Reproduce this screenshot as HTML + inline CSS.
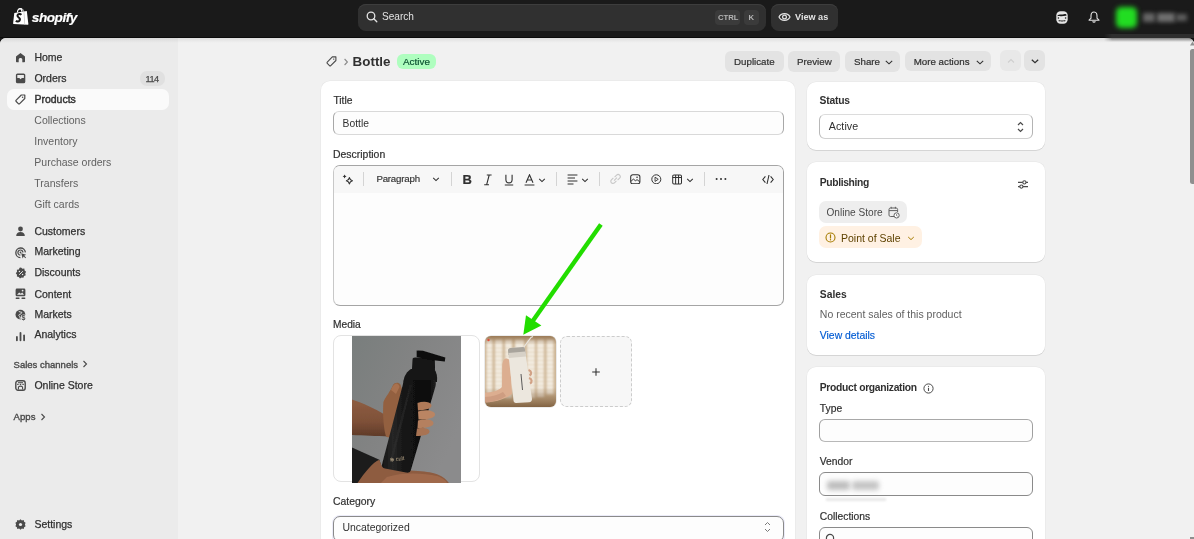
<!DOCTYPE html>
<html><head><meta charset="utf-8"><style>
*{margin:0;padding:0;box-sizing:border-box}
html,body{width:1194px;height:539px;overflow:hidden;background:#1a1a1a;font-family:"Liberation Sans",sans-serif}
#root{position:absolute;left:0;top:0;width:1194px;height:539px;overflow:hidden;will-change:transform;background:#1a1a1a}
.a,.t{position:absolute}
.t{white-space:nowrap}
svg{display:block}
#topbar{position:absolute;left:0;top:0;width:1194px;height:38px;background:#1a1a1a}
#frame{position:absolute;left:0;top:37.5px;width:1194px;height:502px;background:#f1f1f1;border-radius:6px 6px 0 0;overflow:hidden}
#content{border-top-right-radius:6px}
#sidebar{position:absolute;left:0;top:37.5px;width:178px;height:502px;background:#ebebeb;border-top-left-radius:6px}
#content{position:absolute;left:178px;top:37.5px;width:1016px;height:502px;background:#f1f1f1}
.card{position:absolute;background:#fff;border-radius:9px;box-shadow:0 1px 0 rgba(0,0,0,.09),0 0 0 0.5px rgba(0,0,0,.05)}
</style></head><body><div id="root">
<div id="topbar"></div><svg class="a" style="left:10px;top:5px" width="24" height="24" viewBox="0 0 24 24">
<path d="M4.3 8.1 L16.8 5.9 L18.4 19.3 C18.4 19.6 18.2 19.8 17.9 19.8 L3.6 18.9 C3.2 18.9 3 18.6 3.1 18.3 Z" fill="#fff"/>
<path d="M13.5 6.5 L14.3 6.4 L15.2 19.6 L14.4 19.6 Z" fill="#c8c8c8"/>
<path d="M7.4 7.6 C7.4 5 8.8 3.4 10.2 3.6 C11.4 3.8 11.8 5.2 11.8 6.8" stroke="#fff" stroke-width="1.1" fill="none"/>
<path d="M9.6 4.6 C10.4 3.2 12.2 3.2 12.8 4.6 C13.1 5.3 13.2 6 13.2 6.6" stroke="#fff" stroke-width="1" fill="none"/>
<path d="M11.3 9.9 C10.6 9 8.9 8.8 8 9.6 C7 10.5 7.5 11.7 8.7 12.5 C9.9 13.3 10.3 14.4 9.5 15.6 C8.6 16.8 6.7 16.6 5.9 15.8" stroke="#1a1a1a" stroke-width="2" fill="none"/>
</svg><div class="t" style="left:31.80px;top:10.59px;font-size:13.6px;line-height:13.6px;font-weight:700;color:#fff;font-style:italic;letter-spacing:-0.45px;-webkit-text-stroke:0.2px #fff">shopify</div>
<div class="a" style="left:358px;top:4px;width:408px;height:27px;background:#303030;border-radius:8px;box-shadow:inset 0 1px 0 #3d3d3d"></div><svg class="a" style="left:366px;top:11px" width="12" height="12" viewBox="0 0 12 12"><circle cx="5" cy="5" r="3.8" stroke="#e3e3e3" stroke-width="1.3" fill="none"/><path d="M7.8 7.8 L10.8 10.8" stroke="#e3e3e3" stroke-width="1.3" stroke-linecap="round"/></svg><div class="t" style="left:382.00px;top:12.45px;font-size:10.1px;line-height:10.1px;font-weight:400;color:#e3e3e3;">Search</div>
<div class="a" style="left:715px;top:10px;width:25px;height:15px;background:#3b3b3b;border-radius:4px"></div><div class="t" style="left:718.00px;top:13.58px;font-size:7.7px;line-height:7.7px;font-weight:700;color:#b5b5b5;">CTRL</div>
<div class="a" style="left:744px;top:10px;width:15px;height:15px;background:#3b3b3b;border-radius:4px"></div><div class="t" style="left:748.50px;top:13.58px;font-size:7.7px;line-height:7.7px;font-weight:700;color:#b5b5b5;">K</div>
<div class="a" style="left:770.5px;top:4px;width:67.5px;height:27px;background:#303030;border-radius:8px;box-shadow:inset 0 1px 0 #3d3d3d"></div><svg class="a" style="left:778px;top:11px" width="13" height="12" viewBox="0 0 13 12"><path d="M1 6 C3 1.6 10 1.6 12 6 C10 10.4 3 10.4 1 6 Z" stroke="#e3e3e3" stroke-width="1.2" fill="none"/><circle cx="6.5" cy="6" r="1.9" stroke="#e3e3e3" stroke-width="1.2" fill="none"/></svg><div class="t" style="left:795.00px;top:12.90px;font-size:9.1px;line-height:9.1px;font-weight:700;color:#e3e3e3;">View as</div>
<svg class="a" style="left:1055.5px;top:10.5px" width="12" height="13" viewBox="0 0 12 13"><rect x="0.3" y="0.3" width="11.4" height="12.4" rx="4.2" fill="#e6e6e6"/><path d="M1.6 4.2 C3 3.2 5 3.6 6.6 3.4 C8 3.2 9 2.6 10.4 3.6 L10.4 4.8 C8.6 4.6 6.8 5.4 4.6 5.2 C3.4 5.1 2.4 5 1.6 5.2 Z" fill="#1a1a1a"/><circle cx="2.4" cy="7" r="0.8" fill="#1a1a1a"/><circle cx="9.6" cy="7" r="0.8" fill="#1a1a1a"/><path d="M2.4 9.6 C3.6 8.6 4.8 9.8 6 9.4 C7.2 9.8 8.4 8.6 9.6 9.6 L9 10.6 C7.6 10 6.8 10.8 6 10.4 C5.2 10.8 4.4 10 3 10.6 Z" fill="#1a1a1a"/></svg><svg class="a" style="left:1087.5px;top:11px" width="12" height="13" viewBox="0 0 12 13"><path d="M6 1 C3.6 1 3 3 3 5 L3 7.2 L1 9.2 L11 9.2 L9 7.2 L9 5 C9 3 8.4 1 6 1 Z" stroke="#e3e3e3" stroke-width="1.1" fill="none" stroke-linejoin="round"/><path d="M4.8 10.2 C5 11.6 7 11.6 7.2 10.2" stroke="#e3e3e3" stroke-width="1.1" fill="none"/></svg><div class="a" style="left:1116px;top:7px;width:21px;height:21px;background:#22dd22;border-radius:5px;filter:blur(2.5px)"></div><div class="a" style="left:1143px;top:13px;width:12px;height:9px;background:#666;filter:blur(2px)"></div><div class="a" style="left:1157px;top:13px;width:18px;height:9px;background:#707070;filter:blur(2px)"></div><div class="a" style="left:1176px;top:14px;width:11px;height:7px;background:#5e5e5e;filter:blur(2px)"></div><div id="frame"></div><div id="sidebar"></div><div id="content"></div><div class="a" style="left:0;top:36.5px;width:1194px;height:1px;background:#0c0c0c"></div><div class="a" style="left:0;top:37.5px;width:1194px;height:5px;background:linear-gradient(rgba(0,0,0,.075),rgba(0,0,0,0));border-radius:6px 6px 0 0"></div><div class="a" style="left:1104px;top:33.8px;width:92px;height:3.8px;background:linear-gradient(90deg,rgba(46,46,46,0),#2e2e2e 8px)"></div><div class="a" style="left:1104px;top:37.6px;width:92px;height:4.6px;background:linear-gradient(rgba(0,0,0,.42),rgba(0,0,0,0));-webkit-mask-image:linear-gradient(90deg,transparent,#000 8px)"></div><div class="a" style="left:7px;top:88.7px;width:162px;height:21.3px;background:#fafafa;border-radius:7px"></div><div class="t" style="left:34.40px;top:51.91px;font-size:10.5px;line-height:10.5px;font-weight:400;color:#303030;-webkit-text-stroke:0.25px #303030">Home</div>
<div class="t" style="left:34.40px;top:72.61px;font-size:10.5px;line-height:10.5px;font-weight:400;color:#303030;-webkit-text-stroke:0.25px #303030">Orders</div>
<div class="t" style="left:34.40px;top:93.51px;font-size:10.5px;line-height:10.5px;font-weight:400;color:#303030;-webkit-text-stroke:0.4px #303030">Products</div>
<div class="t" style="left:34.30px;top:115.21px;font-size:10.5px;line-height:10.5px;font-weight:400;color:#616161;">Collections</div>
<div class="t" style="left:34.30px;top:136.31px;font-size:10.5px;line-height:10.5px;font-weight:400;color:#616161;">Inventory</div>
<div class="t" style="left:34.30px;top:156.81px;font-size:10.5px;line-height:10.5px;font-weight:400;color:#616161;">Purchase orders</div>
<div class="t" style="left:34.30px;top:178.01px;font-size:10.5px;line-height:10.5px;font-weight:400;color:#616161;">Transfers</div>
<div class="t" style="left:34.30px;top:199.11px;font-size:10.5px;line-height:10.5px;font-weight:400;color:#616161;">Gift cards</div>
<div class="t" style="left:34.40px;top:226.11px;font-size:10.5px;line-height:10.5px;font-weight:400;color:#303030;-webkit-text-stroke:0.25px #303030">Customers</div>
<div class="t" style="left:34.40px;top:245.81px;font-size:10.5px;line-height:10.5px;font-weight:400;color:#303030;-webkit-text-stroke:0.25px #303030">Marketing</div>
<div class="t" style="left:34.40px;top:266.61px;font-size:10.5px;line-height:10.5px;font-weight:400;color:#303030;-webkit-text-stroke:0.25px #303030">Discounts</div>
<div class="t" style="left:34.40px;top:288.51px;font-size:10.5px;line-height:10.5px;font-weight:400;color:#303030;-webkit-text-stroke:0.25px #303030">Content</div>
<div class="t" style="left:34.40px;top:308.81px;font-size:10.5px;line-height:10.5px;font-weight:400;color:#303030;-webkit-text-stroke:0.25px #303030">Markets</div>
<div class="t" style="left:34.40px;top:329.31px;font-size:10.5px;line-height:10.5px;font-weight:400;color:#303030;-webkit-text-stroke:0.25px #303030">Analytics</div>
<div class="t" style="left:13.60px;top:360.26px;font-size:9.5px;line-height:9.5px;font-weight:400;color:#4a4a4a;-webkit-text-stroke:0.35px #4a4a4a">Sales channels</div>
<div class="t" style="left:34.40px;top:380.31px;font-size:10.5px;line-height:10.5px;font-weight:400;color:#303030;-webkit-text-stroke:0.25px #303030">Online Store</div>
<div class="t" style="left:13.60px;top:412.37px;font-size:9.6px;line-height:9.6px;font-weight:400;color:#4a4a4a;-webkit-text-stroke:0.35px #4a4a4a">Apps</div>
<div class="t" style="left:34.40px;top:519.21px;font-size:10.5px;line-height:10.5px;font-weight:400;color:#303030;-webkit-text-stroke:0.25px #303030">Settings</div>
<div class="a" style="left:140.2px;top:71px;width:25px;height:14.6px;background:#e0e0e0;border-radius:7px"></div><div class="t" style="left:145.60px;top:74.71px;font-size:9.2px;line-height:9.2px;font-weight:400;color:#4a4a4a;letter-spacing:-0.55px;-webkit-text-stroke:0.25px #4a4a4a">114</div>
<svg class="a" style="left:82px;top:360px" width="6" height="8" viewBox="0 0 6 8"><path d="M1.5 1 L4.5 4 L1.5 7" stroke="#4a4a4a" stroke-width="1.1" fill="none"/></svg><svg class="a" style="left:40px;top:412.5px" width="6" height="8" viewBox="0 0 6 8"><path d="M1.5 1 L4.5 4 L1.5 7" stroke="#4a4a4a" stroke-width="1.1" fill="none"/></svg><svg class="a" style="left:15px;top:52px" width="11" height="11" viewBox="0 0 11 11"><path d="M1 4.6 L5.5 0.9 L10 4.6 L10 9.6 C10 10 9.7 10.3 9.3 10.3 L7.3 10.3 L7.3 7.6 C7.3 6.6 6.5 5.9 5.5 5.9 C4.5 5.9 3.7 6.6 3.7 7.6 L3.7 10.3 L1.7 10.3 C1.3 10.3 1 10 1 9.6 Z" fill="#4a4a4a"/></svg><svg class="a" style="left:15px;top:73px" width="11" height="11" viewBox="0 0 11 11"><rect x="0.9" y="0.5" width="9.4" height="9.8" rx="1.6" fill="#4a4a4a"/><path d="M2.3 2 L8.9 2 L8.9 5 L6.9 5 L5.6 6.3 L4.3 5 L2.3 5 Z" fill="#ebebeb"/></svg><svg class="a" style="left:15px;top:93.5px" width="11" height="11" viewBox="0 0 11 11"><path d="M6.3 1 L9.8 1 L9.8 4.5 L4.7 9.6 C4.3 10 3.7 10 3.3 9.6 L1.2 7.5 C0.8 7.1 0.8 6.5 1.2 6.1 Z" stroke="#4a4a4a" stroke-width="1.2" fill="none" stroke-linejoin="round"/><circle cx="7.6" cy="3.2" r="0.8" fill="#4a4a4a"/></svg><svg class="a" style="left:15px;top:225.8px" width="11" height="11" viewBox="0 0 11 11"><circle cx="5.5" cy="3" r="2.4" fill="#4a4a4a"/><path d="M1.2 10 C1.2 7.2 3 6 5.5 6 C8 6 9.8 7.2 9.8 10 Z" fill="#4a4a4a"/></svg><svg class="a" style="left:14.5px;top:247px" width="12" height="12" viewBox="0 0 12 12"><path d="M10.4 5.4 A4.8 4.8 0 1 0 5.4 10.6" stroke="#4a4a4a" stroke-width="1.3" fill="none"/><path d="M7.9 5.6 A2.5 2.5 0 1 0 5.5 8" stroke="#4a4a4a" stroke-width="1.2" fill="none"/><circle cx="5.5" cy="5.5" r="0.9" fill="#4a4a4a"/><path d="M6.2 6.2 L11.2 7.8 L9.2 8.8 L11 10.6 L10.4 11.2 L8.6 9.4 L7.6 11.4 Z" fill="#4a4a4a"/></svg><svg class="a" style="left:14.5px;top:267px" width="12" height="12" viewBox="0 0 12 12"><path d="M6 0.6 L7.4 1.8 L9.3 1.6 L9.6 3.5 L11.1 4.7 L10.2 6.4 L10.8 8.2 L9 9 L8.4 10.8 L6.6 10.4 L5 11.4 L3.8 9.9 L1.9 9.6 L2 7.7 L0.8 6.2 L2 4.7 L1.9 2.8 L3.8 2.4 L4.6 0.8 Z" fill="#4a4a4a"/><path d="M4.2 7.8 L7.8 4.2" stroke="#ebebeb" stroke-width="1"/><circle cx="4.4" cy="4.5" r="0.7" fill="#ebebeb"/><circle cx="7.6" cy="7.5" r="0.7" fill="#ebebeb"/></svg><svg class="a" style="left:15px;top:288px" width="11" height="12" viewBox="0 0 11 12"><rect x="0.6" y="0.6" width="9.8" height="7.6" rx="1.3" fill="#4a4a4a"/><path d="M2 6.8 L4.2 4.4 L5.8 5.8 L7.2 4.6 L9 6.8 Z" fill="#ebebeb"/><circle cx="7.6" cy="2.6" r="0.9" fill="#ebebeb"/><rect x="0.6" y="9.6" width="4" height="1.3" rx="0.6" fill="#4a4a4a"/><rect x="6.4" y="9.6" width="4" height="1.3" rx="0.6" fill="#4a4a4a"/></svg><svg class="a" style="left:14.5px;top:309px" width="12" height="12" viewBox="0 0 12 12"><circle cx="5.4" cy="5.6" r="4.9" fill="#4a4a4a"/><path d="M3.2 1.6 C4.2 3 5.6 3.2 6.6 3 C7 4 6.2 5 5 5.2 C3.8 5.4 3.4 6.6 4.4 7.4 C5 8 5.4 9.4 5 10.4" stroke="#ebebeb" stroke-width="0.9" fill="none"/><circle cx="8.8" cy="8.6" r="3.2" fill="#ebebeb"/><text x="6.6" y="11.4" font-family="Liberation Sans" font-size="7" font-weight="700" fill="#4a4a4a">$</text></svg><svg class="a" style="left:15px;top:330.8px" width="11" height="11" viewBox="0 0 11 11"><rect x="1" y="5" width="1.8" height="5.2" rx="0.9" fill="#4a4a4a"/><rect x="4.6" y="1" width="1.8" height="9.2" rx="0.9" fill="#4a4a4a"/><rect x="8.2" y="3.4" width="1.8" height="6.8" rx="0.9" fill="#4a4a4a"/></svg><svg class="a" style="left:15px;top:380px" width="11" height="11" viewBox="0 0 11 11"><rect x="0.8" y="0.8" width="9.4" height="9.4" rx="2.2" stroke="#4a4a4a" stroke-width="1.4" fill="none"/><path d="M3 2.7 L8 2.7" stroke="#4a4a4a" stroke-width="1"/><path d="M2.2 4.4 L8.8 4.4" stroke="#4a4a4a" stroke-width="1.2" stroke-dasharray="1.4 1.2"/><path d="M3.4 9.6 L3.4 7.6 C3.4 6.6 4.3 6.1 5.5 6.1 C6.7 6.1 7.6 6.6 7.6 7.6 L7.6 9.6" stroke="#4a4a4a" stroke-width="1.1" fill="none"/></svg><svg class="a" style="left:15px;top:519px" width="11" height="11" viewBox="0 0 11 11"><path d="M5.5 0.3 L6.9 1.4 L8.7 1.1 L9.1 2.8 L10.6 3.8 L9.9 5.5 L10.6 7.2 L9.1 8.2 L8.7 9.9 L6.9 9.6 L5.5 10.7 L4.1 9.6 L2.3 9.9 L1.9 8.2 L0.4 7.2 L1.1 5.5 L0.4 3.8 L1.9 2.8 L2.3 1.1 L4.1 1.4 Z" fill="#4a4a4a"/><circle cx="5.5" cy="5.5" r="1.6" fill="#ebebeb"/></svg><svg class="a" style="left:325.5px;top:55.5px" width="11" height="11" viewBox="0 0 12 12"><path d="M6.9 1 L10.8 1 L10.8 4.9 L5.2 10.5 C4.8 10.9 4.2 10.9 3.8 10.5 L1.4 8.1 C1 7.7 1 7.1 1.4 6.7 Z" stroke="#4a4a4a" stroke-width="1.2" fill="none" stroke-linejoin="round"/><circle cx="8.4" cy="3.4" r="0.8" fill="#4a4a4a"/></svg><svg class="a" style="left:342.5px;top:57.5px" width="6" height="8" viewBox="0 0 6 8"><path d="M1.6 1 L4.4 4 L1.6 7" stroke="#8a8a8a" stroke-width="1.1" fill="none"/></svg><div class="t" style="left:352.60px;top:55.16px;font-size:13.4px;line-height:13.4px;font-weight:700;color:#303030;">Bottle</div>
<div class="a" style="left:396.6px;top:53.7px;width:39.6px;height:15px;background:#affebf;border-radius:6px"></div><div class="t" style="left:403.00px;top:56.92px;font-size:9.9px;line-height:9.9px;font-weight:400;color:#0c5132;-webkit-text-stroke:0.2px #0c5132">Active</div>
<div class="a" style="left:725px;top:50.8px;width:59px;height:21.0px;background:#e3e3e3;border-radius:6px"></div><div class="t" style="left:734.00px;top:57.25px;font-size:9.75px;line-height:9.75px;font-weight:400;color:#303030;-webkit-text-stroke:0.2px #303030">Duplicate</div>
<div class="a" style="left:788.2px;top:50.8px;width:52.19999999999993px;height:21.0px;background:#e3e3e3;border-radius:6px"></div><div class="t" style="left:797.00px;top:57.25px;font-size:9.75px;line-height:9.75px;font-weight:400;color:#303030;-webkit-text-stroke:0.2px #303030">Preview</div>
<div class="a" style="left:845.2px;top:50.8px;width:54.799999999999955px;height:21.0px;background:#e3e3e3;border-radius:6px"></div><div class="t" style="left:854.00px;top:57.25px;font-size:9.75px;line-height:9.75px;font-weight:400;color:#303030;-webkit-text-stroke:0.2px #303030">Share</div>
<svg class="a" style="left:885px;top:58px" width="8" height="8" viewBox="0 0 8 8"><path d="M0.8 2.8 L4 5.8 L7.2 2.8" stroke="#303030" stroke-width="1.1" fill="none"/></svg><div class="a" style="left:905.2px;top:50.8px;width:85.69999999999993px;height:20.700000000000003px;background:#e3e3e3;border-radius:6px"></div><div class="t" style="left:913.70px;top:57.25px;font-size:9.75px;line-height:9.75px;font-weight:400;color:#303030;-webkit-text-stroke:0.2px #303030">More actions</div>
<svg class="a" style="left:975.5px;top:58px" width="8" height="8" viewBox="0 0 8 8"><path d="M0.8 2.8 L4 5.8 L7.2 2.8" stroke="#303030" stroke-width="1.1" fill="none"/></svg><div class="a" style="left:1000px;top:50px;width:20.799999999999955px;height:20.799999999999997px;background:#e8e8e8;border-radius:6px"></div><svg class="a" style="left:1006.5px;top:56.5px" width="8" height="8" viewBox="0 0 8 8"><path d="M1 5.5 L4 2.5 L7 5.5" stroke="#cfcfcf" stroke-width="1.1" fill="none"/></svg><div class="a" style="left:1024.2px;top:50px;width:20.59999999999991px;height:20.799999999999997px;background:#e3e3e3;border-radius:6px"></div><svg class="a" style="left:1030.5px;top:57px" width="8" height="8" viewBox="0 0 8 8"><path d="M0.8 2.8 L4 5.8 L7.2 2.8" stroke="#303030" stroke-width="1.2" fill="none"/></svg><div class="card" style="left:320.5px;top:81.3px;width:474.6px;height:470px"></div><div class="t" style="left:333.40px;top:95.68px;font-size:10.3px;line-height:10.3px;font-weight:400;color:#303030;-webkit-text-stroke:0.2px #303030">Title</div>
<div class="a" style="left:333.1px;top:111.4px;width:450.8px;height:23.7px;background:#fdfdfd;border:1px solid;border-color:#d9d9d9 #a8a8a8 #d9d9d9 #a8a8a8;border-radius:6px"></div><div class="t" style="left:342.60px;top:118.58px;font-size:10.3px;line-height:10.3px;font-weight:400;color:#303030;">Bottle</div>
<div class="t" style="left:333.00px;top:149.75px;font-size:10.45px;line-height:10.45px;font-weight:400;color:#303030;-webkit-text-stroke:0.2px #303030">Description</div>
<div class="a" style="left:333.4px;top:165px;width:450.3px;height:140.6px;background:#fdfdfd;border:1px solid;border-color:#a5a5a5 #a0a0a0 #a5a5a5 #c8c8c8;border-radius:7px;overflow:hidden"><div style="position:absolute;left:0;top:0;width:100%;height:26.8px;background:#f7f7f7"></div></div><div class="card" style="left:807.3px;top:81.5px;width:238px;height:68.5px"></div><div class="t" style="left:819.60px;top:96.18px;font-size:10.3px;line-height:10.3px;font-weight:700;color:#303030;letter-spacing:-0.2px">Status</div>
<div class="a" style="left:819.3px;top:114px;width:213.3px;height:24.6px;background:#fff;border:1px solid;border-color:#dcdcdc #b4b4b4 #d0d0d0 #b8b8b8;border-radius:6px"></div><div class="t" style="left:828.80px;top:121.34px;font-size:10.7px;line-height:10.7px;font-weight:400;color:#303030;letter-spacing:0.05px">Active</div>
<svg class="a" style="left:1016px;top:120.5px" width="9" height="12" viewBox="0 0 9 12"><path d="M2 4 L4.5 1.5 L7 4 M2 8 L4.5 10.5 L7 8" stroke="#4a4a4a" stroke-width="1.2" fill="none"/></svg><div class="card" style="left:807.3px;top:161.7px;width:238px;height:100.7px"></div><div class="t" style="left:819.80px;top:177.68px;font-size:10.3px;line-height:10.3px;font-weight:700;color:#303030;letter-spacing:-0.35px">Publishing</div>
<svg class="a" style="left:1016.5px;top:179px" width="12" height="11" viewBox="0 0 12 11"><path d="M1 3.4 L11 3.4 M1 7.6 L11 7.6" stroke="#4a4a4a" stroke-width="1.1"/><circle cx="7.4" cy="3.4" r="1.6" fill="#fff" stroke="#4a4a4a" stroke-width="1.1"/><circle cx="4.4" cy="7.6" r="1.6" fill="#fff" stroke="#4a4a4a" stroke-width="1.1"/></svg><div class="a" style="left:819.2px;top:201px;width:88px;height:22.2px;background:#eeeeee;border-radius:7px"></div><div class="t" style="left:826.50px;top:207.95px;font-size:10.1px;line-height:10.1px;font-weight:400;color:#4a4a4a;">Online Store</div>
<svg class="a" style="left:887.5px;top:206px" width="12" height="13" viewBox="0 0 12 13"><path d="M6.5 10.5 L2.4 10.5 C1.6 10.5 1 9.9 1 9.1 L1 3.4 C1 2.6 1.6 2 2.4 2 L8.2 2 C9 2 9.6 2.6 9.6 3.4 L9.6 6 M1 4.6 L9.6 4.6 M3.2 0.8 L3.2 2.6 M7.4 0.8 L7.4 2.6" stroke="#616161" stroke-width="1" fill="none"/><circle cx="8.6" cy="9.4" r="2.6" stroke="#616161" stroke-width="1" fill="#fff"/><path d="M8.6 8.2 L8.6 9.6 L9.5 10.2" stroke="#616161" stroke-width="0.9" fill="none"/></svg><div class="a" style="left:819.2px;top:226.4px;width:103.2px;height:21.8px;background:#fff1e3;border-radius:7px"></div><svg class="a" style="left:824.5px;top:232px" width="11" height="11" viewBox="0 0 11 11"><circle cx="5.5" cy="5.5" r="4.5" stroke="#a67c00" stroke-width="1.1" fill="none"/><path d="M5.5 2.9 L5.5 6" stroke="#a67c00" stroke-width="1.2" stroke-linecap="round"/><circle cx="5.5" cy="7.8" r="0.7" fill="#a67c00"/></svg><div class="t" style="left:841.00px;top:232.91px;font-size:10.5px;line-height:10.5px;font-weight:400;color:#5e4200;">Point of Sale</div>
<svg class="a" style="left:906.5px;top:233.5px" width="8" height="8" viewBox="0 0 8 8"><path d="M1.2 3 L4 5.6 L6.8 3" stroke="#a67c00" stroke-width="1" fill="none"/></svg><div class="card" style="left:807.3px;top:274.8px;width:238px;height:80.2px"></div><div class="t" style="left:819.80px;top:290.08px;font-size:10.3px;line-height:10.3px;font-weight:700;color:#303030;letter-spacing:0px">Sales</div>
<div class="t" style="left:819.80px;top:309.11px;font-size:10.5px;line-height:10.5px;font-weight:400;color:#616161;">No recent sales of this product</div>
<div class="t" style="left:819.80px;top:331.20px;font-size:10.4px;line-height:10.4px;font-weight:400;color:#005bd3;-webkit-text-stroke:0.15px #005bd3">View details</div>
<div class="card" style="left:807.3px;top:367.3px;width:238px;height:200px"></div><div class="t" style="left:819.80px;top:382.58px;font-size:10.3px;line-height:10.3px;font-weight:700;color:#303030;letter-spacing:-0.3px">Product organization</div>
<svg class="a" style="left:923px;top:382.5px" width="11" height="11" viewBox="0 0 11 11"><circle cx="5.5" cy="5.5" r="4.6" stroke="#4a4a4a" stroke-width="1" fill="none"/><path d="M5.5 4.8 L5.5 8" stroke="#4a4a4a" stroke-width="1.1"/><circle cx="5.5" cy="3.3" r="0.6" fill="#4a4a4a"/></svg><div class="t" style="left:819.80px;top:403.98px;font-size:10.3px;line-height:10.3px;font-weight:400;color:#303030;-webkit-text-stroke:0.2px #303030">Type</div>
<div class="a" style="left:819.3px;top:418.5px;width:213.6px;height:23.5px;background:#fdfdfd;border:1px solid;border-color:#a8a8a8 #a0a0a0 #b8b8b8 #a0a0a0;border-radius:6px"></div><div class="t" style="left:819.80px;top:457.38px;font-size:10.3px;line-height:10.3px;font-weight:400;color:#303030;-webkit-text-stroke:0.2px #303030">Vendor</div>
<div class="a" style="left:819.3px;top:472.3px;width:213.6px;height:24.2px;background:#fdfdfd;border:1px solid #8a8a8a;border-radius:6px"></div><div class="a" style="left:827px;top:480.5px;width:23px;height:9px;background:#bdbdbd;border-radius:3px;filter:blur(2.4px)"></div><div class="a" style="left:852px;top:480.5px;width:27px;height:9px;background:#c4c4c4;border-radius:3px;filter:blur(2.4px)"></div><div class="a" style="left:826px;top:498px;width:60px;height:3px;background:#e8e8e8;filter:blur(1px)"></div><div class="t" style="left:819.80px;top:511.58px;font-size:10.3px;line-height:10.3px;font-weight:400;color:#303030;-webkit-text-stroke:0.2px #303030">Collections</div>
<div class="a" style="left:819.3px;top:526.8px;width:213.6px;height:24px;background:#fdfdfd;border:1px solid #8a8a8a;border-radius:6px"></div><svg class="a" style="left:825px;top:532.5px" width="11" height="11" viewBox="0 0 11 11"><circle cx="5" cy="5" r="3.6" stroke="#4a4a4a" stroke-width="1.2" fill="none"/></svg><svg class="a" style="left:342px;top:173px" width="12" height="13" viewBox="0 0 12 13"><path d="M7.4 4.6 C7.8 6.6 8.4 7.2 10.4 7.8 C8.4 8.4 7.8 9 7.4 11 C7 9 6.4 8.4 4.4 7.8 C6.4 7.2 7 6.6 7.4 4.6 Z" stroke="#303030" stroke-width="1.15" fill="none" stroke-linejoin="round"/><path d="M2.6 1.4 L3.3 2.7 L4.6 3.4 L3.3 4.1 L2.6 5.4 L1.9 4.1 L0.6 3.4 L1.9 2.7 Z" fill="#303030"/></svg><div class="a" style="left:363px;top:172px;width:1px;height:14px;background:#d4d4d4"></div><div class="a" style="left:450.5px;top:172px;width:1px;height:14px;background:#d4d4d4"></div><div class="a" style="left:556px;top:172px;width:1px;height:14px;background:#d4d4d4"></div><div class="a" style="left:599px;top:172px;width:1px;height:14px;background:#d4d4d4"></div><div class="a" style="left:704px;top:172px;width:1px;height:14px;background:#d4d4d4"></div><div class="t" style="left:376.40px;top:174.19px;font-size:9.7px;line-height:9.7px;font-weight:400;color:#303030;letter-spacing:-0.2px;-webkit-text-stroke:0.15px #303030">Paragraph</div>
<svg class="a" style="left:431.8px;top:175.1px" width="8" height="8" viewBox="0 0 8 8"><path d="M1.2 2.8 L4 5.6 L6.8 2.8" stroke="#303030" stroke-width="1.05" fill="none"/></svg><div class="t" style="left:462.5px;top:172.6px;font-size:13px;line-height:14px;font-weight:700;color:#303030;-webkit-text-stroke:0.2px #303030">B</div><svg class="a" style="left:483px;top:173.5px" width="10" height="12" viewBox="0 0 10 12"><path d="M3.8 1 L8.6 1 M1.2 10.8 L6 10.8 M6.2 1 L3.6 10.8" stroke="#303030" stroke-width="1.1" fill="none"/></svg><svg class="a" style="left:503.5px;top:173.5px" width="10" height="12" viewBox="0 0 10 12"><path d="M1.9 0.8 L1.9 5.8 C1.9 8 3.2 8.9 5 8.9 C6.8 8.9 8.1 8 8.1 5.8 L8.1 0.8 M0.8 11 L9.2 11" stroke="#303030" stroke-width="1.1" fill="none"/></svg><svg class="a" style="left:523.5px;top:173.5px" width="11" height="12" viewBox="0 0 11 12"><path d="M2 8.8 L5.5 0.8 L9 8.8 M3.2 6 L7.8 6 M0.6 11 L10.4 11" stroke="#303030" stroke-width="1.1" fill="none"/></svg><svg class="a" style="left:538px;top:175.5px" width="8" height="8" viewBox="0 0 8 8"><path d="M1.2 2.8 L4 5.6 L6.8 2.8" stroke="#303030" stroke-width="1.05" fill="none"/></svg><svg class="a" style="left:566.5px;top:173.5px" width="11" height="12" viewBox="0 0 11 12"><path d="M0.6 1 L10.4 1 M0.6 4 L8 4 M0.6 7 L10.4 7 M0.6 10 L6.5 10" stroke="#303030" stroke-width="1.1"/></svg><svg class="a" style="left:581px;top:175.5px" width="8" height="8" viewBox="0 0 8 8"><path d="M1.2 2.8 L4 5.6 L6.8 2.8" stroke="#303030" stroke-width="1.05" fill="none"/></svg><svg class="a" style="left:609.5px;top:173px" width="11" height="12" viewBox="0 0 11 12"><path d="M4.6 4.2 L6.6 2.2 C7.4 1.4 8.8 1.4 9.6 2.2 C10.4 3 10.4 4.4 9.6 5.2 L7.6 7.2 M6.4 7.8 L4.4 9.8 C3.6 10.6 2.2 10.6 1.4 9.8 C0.6 9 0.6 7.6 1.4 6.8 L3.4 4.8 M4 7.6 L7 4.6" stroke="#c7c7c7" stroke-width="1.1" fill="none"/></svg><svg class="a" style="left:630.2px;top:173.8px" width="10.6" height="10.6" viewBox="0 0 12 12"><rect x="0.8" y="0.8" width="10.4" height="10.4" rx="2.4" stroke="#303030" stroke-width="1.2" fill="none"/><path d="M1 8.4 L3.8 5.8 L6.2 7.6 L8 6.4 L11 8.8" stroke="#303030" stroke-width="1.1" fill="none"/><circle cx="8" cy="3.6" r="0.9" fill="#303030"/></svg><svg class="a" style="left:651.2px;top:173.8px" width="10.6" height="10.6" viewBox="0 0 12 12"><circle cx="6" cy="6" r="5.1" stroke="#303030" stroke-width="1.1" fill="none"/><path d="M4.6 3.6 L8.2 6 L4.6 8.4 Z" stroke="#303030" stroke-width="1" fill="none" stroke-linejoin="round"/></svg><svg class="a" style="left:672px;top:173.6px" width="10.2" height="11" viewBox="0 0 11 12"><rect x="0.7" y="1" width="9.6" height="10" rx="1.4" stroke="#303030" stroke-width="1.1" fill="none"/><path d="M0.7 3.8 L10.3 3.8 M3.9 1 L3.9 11 M7.1 1 L7.1 11" stroke="#303030" stroke-width="1.1"/></svg><svg class="a" style="left:685.5px;top:175.5px" width="8" height="8" viewBox="0 0 8 8"><path d="M1.2 2.8 L4 5.6 L6.8 2.8" stroke="#303030" stroke-width="1.05" fill="none"/></svg><svg class="a" style="left:714.5px;top:177px" width="12" height="4" viewBox="0 0 12 4"><circle cx="1.6" cy="2" r="1" fill="#303030"/><circle cx="6" cy="2" r="1" fill="#303030"/><circle cx="10.4" cy="2" r="1" fill="#303030"/></svg><svg class="a" style="left:761.5px;top:173.5px" width="12" height="11" viewBox="0 0 12 11"><path d="M3.4 2.4 L0.8 5.5 L3.4 8.6 M8.6 2.4 L11.2 5.5 L8.6 8.6 M7 1 L5 10" stroke="#303030" stroke-width="1.1" fill="none"/></svg><div class="t" style="left:333.00px;top:319.87px;font-size:10.2px;line-height:10.2px;font-weight:400;color:#303030;-webkit-text-stroke:0.2px #303030">Media</div>
<div class="a" style="left:333.3px;top:335.3px;width:146.6px;height:146.7px;background:#fff;border:1px solid #e3e3e3;border-radius:8px"></div><svg class="a" style="left:351px;top:335.5px" width="110" height="147" viewBox="0 0 110 147">
<defs><linearGradient id="bg1" x1="0" y1="0" x2="1" y2="0.6"><stop offset="0" stop-color="#797e7d"/><stop offset="0.45" stop-color="#828383"/><stop offset="1" stop-color="#8b8b8c"/></linearGradient>
<linearGradient id="bt" x1="0" y1="0" x2="1" y2="0"><stop offset="0" stop-color="#161616"/><stop offset="0.2" stop-color="#262626"/><stop offset="0.45" stop-color="#131313"/><stop offset="0.9" stop-color="#0e0e0e"/><stop offset="1" stop-color="#232323"/></linearGradient>
<linearGradient id="arm" x1="0" y1="0" x2="0" y2="1"><stop offset="0" stop-color="#8e5e42"/><stop offset="0.6" stop-color="#7e5038"/><stop offset="1" stop-color="#5e3a28"/></linearGradient>
<filter id="sb"><feGaussianBlur stdDeviation="0.35"/></filter></defs>
<rect x="1" y="0" width="109" height="147" fill="url(#bg1)"/>
<g filter="url(#sb)">
<path d="M1 63.6 C12 67 24 73 34 78.7 L38 100.5 C26 100.5 12 99.5 1 99.1 Z" fill="url(#arm)"/>
<path d="M32.4 66 C35 60 39 56 42 49 C43.5 46.5 47.5 46 49.5 48.5 L52 56 L41 101.5 C39 102 36.5 101.5 35 100.5 C32.5 92 31.5 78 32.4 66 Z" fill="#93603f"/><path d="M40 54 C41 51 43 48 45 47.5 C47 47.5 48 49 48.5 51 L45 58 Z" fill="#a8714f"/>
<path d="M1 111.4 L28.3 123.7 L31 132 L17.4 147 L1 147 Z" fill="#1c1c1c"/>
<path d="M6.5 147 C14 136 22 126 28.3 123.7 L31 130.5 L59.7 134.6 C70 135 78 136 82.9 137.3 C90 139 95 143 97.9 147 Z" fill="#8e5c41"/>
<path d="M36 141 C52 136 72 137 86 140 C92 142 95 145 96 147 L30 147 Z" fill="#a86f50" opacity=".7"/>
<path d="M61.5 24 C61.5 22.4 62.5 21.6 64 21.6 L81.5 21.6 C83 21.6 83.8 22.4 83.8 24 L84 34.5 L61 34 Z" fill="#131313"/>
<path d="M65.7 14.5 L72 14.8 L94.3 21.6 L93.8 25.4 L80 24 L65.7 21 Z" fill="#0f0f0f"/>
<path d="M60 33 L83.5 33.5 C85.5 36 86.5 40 86 46 L52.5 45.5 C53 40 56 35.5 60 33 Z" fill="#141414"/>
<path d="M52.9 44 L84.2 44 C85 46 85 48 84.6 50 L59.7 134.6 C59 136.5 57 137 55 136.6 L34 132.5 C31.5 132 30.5 130.5 31 128.5 L52 48 C52.2 46 52.5 45 52.9 44 Z" fill="url(#bt)"/>
<path d="M58.5 49 L61 49.3 L41 126 L38.8 125.6 Z" fill="#3a3a3a" opacity=".35"/>
<path d="M66.5 67 C72 65 79 65.5 80.5 69 C81 72 77 74 67 74.5 Z" fill="#b07a58"/>
<path d="M67 75.5 C74 73.5 82.5 74 84 78 C84.3 82 78 83.5 67.5 83.5 Z" fill="#ba8563"/>
<path d="M67 84.5 C74 82.5 81.5 83 82.5 87 C82.6 90.5 77 92 66.5 92 Z" fill="#b5805e"/>
<path d="M66 92.5 C72 91.5 78 92 78.5 95.5 C78.5 98.5 73 100 65 100 Z" fill="#a87352"/>
</g>
<text x="38.5" y="126" font-family="Liberation Sans" font-size="5.6" fill="#b8a688" transform="rotate(-8 38.5 126)">&#10059; cult</text>
</svg><div class="a" style="left:485px;top:336px;width:70.5px;height:70.5px;border-radius:6px;overflow:hidden;box-shadow:0 0 0 0.6px #dcdcdc">
<svg width="71" height="71" viewBox="0 0 71 71">
<defs>
<filter id="bl1" x="-10%" y="-10%" width="120%" height="120%"><feGaussianBlur stdDeviation="1.3"/></filter>
<filter id="bl2"><feGaussianBlur stdDeviation="0.5"/></filter>
<pattern id="sl" width="71" height="4.2" patternUnits="userSpaceOnUse"><rect width="71" height="4.2" fill="#f6f1e8"/><rect y="3" width="71" height="1.2" fill="#dfcdb0"/></pattern>
<linearGradient id="vg" x1="0" y1="0" x2="0" y2="1"><stop offset="0" stop-color="#8e6c48" stop-opacity=".8"/><stop offset="0.12" stop-color="#8e6c48" stop-opacity="0"/><stop offset="0.72" stop-color="#8e6c48" stop-opacity="0"/><stop offset="1" stop-color="#7a5a3a" stop-opacity=".9"/></linearGradient>
</defs>
<rect width="71" height="71" fill="#cdb595"/>
<g filter="url(#bl1)">
<rect x="1.5" y="3" width="6" height="60" fill="url(#sl)"/>
<rect x="10" y="3" width="7.5" height="60" fill="url(#sl)"/>
<rect x="20" y="3" width="7" height="60" fill="url(#sl)"/>
<rect x="30" y="3" width="9" height="60" fill="url(#sl)"/>
<rect x="42" y="3" width="8" height="60" fill="url(#sl)"/>
<rect x="52" y="3" width="7" height="58" fill="url(#sl)"/>
<rect x="61.5" y="3" width="7" height="56" fill="url(#sl)"/>
</g>
<rect width="71" height="71" fill="url(#vg)"/>
<g filter="url(#bl2)">
<path d="M0 56.5 C7 56.5 13 55 17 51 L17.2 30 C17.4 24.5 19.5 22 22 22.5 L25 24 L27 58 C22 62 12 66 0 66.5 Z" fill="#dcae90"/><path d="M0 61 C7 60.5 13 59 18 56 L21 60 C15 64 8 66 0 66.5 Z" fill="#c8957a" opacity=".7"/>
<path d="M38.5 11.5 L46 1.5 L48 0.5" stroke="#e8e4de" stroke-width="1.2" fill="none"/>
<path d="M23 14.5 C23 13 24 12.2 25.5 12 L38 11 C39.5 11 40 12 40 13.5 L47 63 C47 65 46 66 44 66.2 L31 67 C29.5 67 28.6 66 28.5 64.5 Z" fill="#ece7de"/>
<path d="M23 14.5 C23 13 24 12.2 25.5 12 L38 11 C39.5 11 40 12 40 13.5 L40.6 17.5 L23.4 19 Z" fill="#a9a49c"/>
<path d="M23.4 17 L40.4 15.6 L41 20.5 L23.8 22 Z" fill="#d7d1c7"/>
<path d="M36 38 L37.5 54" stroke="#4a4a4a" stroke-width="0.9"/>
<path d="M43.5 34 C46.5 35 47 38 44.5 39.5 M44 42 C47 43 47.5 46 45 47.5" stroke="#d2a286" stroke-width="2.2" fill="none"/>
</g>
<circle cx="3.5" cy="4" r="1.2" fill="#e0503a"/>
</svg></div><div class="a" style="left:560.3px;top:336px;width:71.6px;height:70.5px;background:#f7f7f7;border:1px dashed #cccccc;border-radius:7px"></div><svg class="a" style="left:591px;top:366.5px" width="10" height="10" viewBox="0 0 10 10"><path d="M5 1.2 L5 8.8 M1.2 5 L8.8 5" stroke="#303030" stroke-width="1.05"/></svg><div class="t" style="left:333.00px;top:497.20px;font-size:10.4px;line-height:10.4px;font-weight:400;color:#303030;-webkit-text-stroke:0.2px #303030">Category</div>
<div class="a" style="left:331.5px;top:514.5px;width:453.5px;height:30px;border-radius:8px;background:#ebebf8"></div><div class="a" style="left:333.3px;top:516.1px;width:450.6px;height:26px;background:#fdfdfd;border:1px solid #8a8a8a;border-radius:7px"></div><div class="t" style="left:342.40px;top:522.65px;font-size:10.45px;line-height:10.45px;font-weight:400;color:#303030;">Uncategorized</div>
<svg class="a" style="left:763px;top:521px" width="9" height="12" viewBox="0 0 9 12"><path d="M2 4 L4.5 1.5 L7 4 M2 8 L4.5 10.5 L7 8" stroke="#7a7a7a" stroke-width="1" fill="none"/></svg><svg class="a" style="left:0;top:0" width="1194" height="539" viewBox="0 0 1194 539"><path d="M600.9 224.4 L532 322" stroke="#22dd00" stroke-width="4.4" stroke-linecap="butt"/><path d="M523.3 334.8 L526 315.2 L541.4 325.4 Z" fill="#22dd00"/></svg><svg class="a" style="left:1189.5px;top:40.5px" width="5" height="5" viewBox="0 0 5 5"><path d="M0 4.6 L2.5 0.6 L5 4.6 Z" fill="#909090"/></svg><div class="a" style="left:1189.8px;top:48.8px;width:5px;height:135.2px;background:#8f8f8f;border-radius:2.5px 0 0 2.5px"></div><div class="a" style="left:1189.5px;top:536.8px;width:5px;height:3px;background:#8f8f8f"></div></div></body></html>
